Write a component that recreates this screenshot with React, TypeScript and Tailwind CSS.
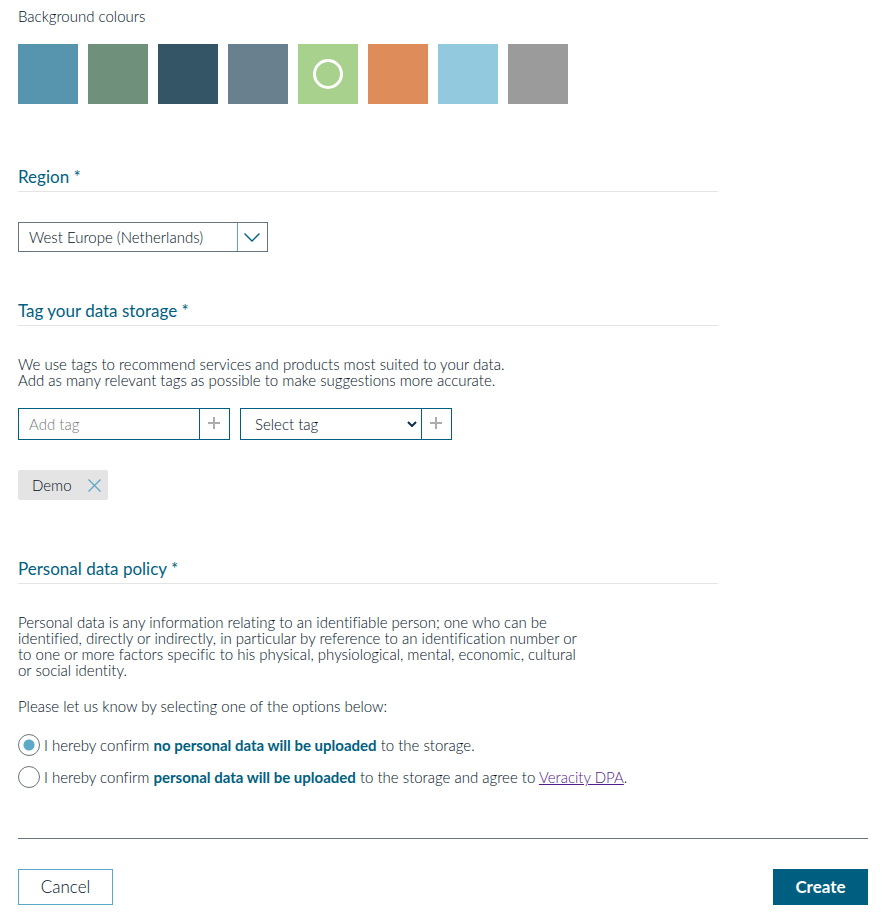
import { useState, type ReactNode } from "react";

const swatches = [
  { name: "Blue", fill: "bg-[#5794ad]" },
  { name: "Green", fill: "bg-[#6f917c]" },
  { name: "Navy", fill: "bg-[#335566]" },
  { name: "Slate", fill: "bg-[#69808f]" },
  { name: "Light green", fill: "bg-[#a9d18e]" },
  { name: "Orange", fill: "bg-[#de8c5a]" },
  { name: "Sky", fill: "bg-[#93c9df]" },
  { name: "Grey", fill: "bg-[#9b9b9b]" },
];

function SectionTitle({ children }: { children: ReactNode }) {
  return (
    <h2 className="max-w-[700px] border-b border-[#e4e4e4] pb-1 text-[17px] leading-5 font-normal text-[#005f80]">
      {children}
    </h2>
  );
}

function PlusIcon() {
  return (
    <svg width="12" height="12" viewBox="0 0 12 12" aria-hidden="true">
      <path d="M6 0v12M0 6h12" stroke="#acacac" strokeWidth="2" />
    </svg>
  );
}

function PlusButton({ label }: { label: string }) {
  return (
    <button
      type="button"
      aria-label={label}
      className="flex w-[30px] border-l border-[#005f80] pt-2 pl-2"
    >
      <PlusIcon />
    </button>
  );
}

const radioClass =
  "size-[22px] shrink-0 appearance-none rounded-full border border-[#69757e] bg-white checked:bg-[radial-gradient(circle,#5ba8c9_5px,white_6px)]";

export default function App() {
  const [colour, setColour] = useState("Light green");
  const [tags, setTags] = useState(["Demo"]);

  return (
    <form
      className="bg-white pt-2 pr-5 pb-3 pl-[18px] font-['Lato','Liberation_Sans',sans-serif] text-[15px] leading-4 font-light text-[#00101c] [font-variant-ligatures:none]"
      onSubmit={(e) => e.preventDefault()}
    >
      <p>Background colours</p>
      <div className="mt-5 flex flex-wrap gap-2.5">
        {swatches.map((s) => (
          <button
            key={s.name}
            type="button"
            aria-label={s.name}
            aria-pressed={colour === s.name}
            onClick={() => setColour(s.name)}
            className={`flex size-[60px] items-center justify-center ${s.fill}`}
          >
            {colour === s.name && (
              <span className="size-[30px] rounded-full border-3 border-white" />
            )}
          </button>
        ))}
      </div>

      <section className="mt-[63px]">
        <SectionTitle>
          <label htmlFor="region">Region *</label>
        </SectionTitle>
        <div className="mt-[30px] grid h-[30px] w-[250px] grid-cols-[1fr_30px] border border-[#69757e]">
          <select
            id="region"
            className="col-span-2 col-start-1 row-start-1 appearance-none bg-transparent pl-2.5 leading-5"
          >
            <option>West Europe (Netherlands)</option>
          </select>
          <span className="pointer-events-none col-start-2 row-start-1 flex items-center border-l border-[#5ba8c9] pl-1.5">
            <svg width="16" height="9" viewBox="0 0 16 9" fill="none" aria-hidden="true">
              <path d="M.5.5 8 8 15.500.5" stroke="#005f80" strokeWidth="1.4" />
            </svg>
          </span>
        </div>
      </section>

      <section className="mt-[49px]">
        <SectionTitle>Tag your data storage *</SectionTitle>
        <p className="mt-[30px]">
          We use tags to recommend services and products most suited to your data.
          <br />
          Add as many relevant tags as possible to make suggestions more accurate.
        </p>
        <div className="mt-5 flex flex-wrap gap-2.5">
          <div className="flex h-8 w-[212px] border border-[#005f80]">
            <input
              type="text"
              aria-label="Add tag"
              placeholder="Add tag"
              className="min-w-0 flex-1 pl-2.5 leading-5 placeholder:text-[#777777]"
            />
            <PlusButton label="Add typed tag" />
          </div>
          <div className="flex h-8 w-[212px] border border-[#005f80]">
            <div className="grid min-w-0 flex-1 grid-cols-[1fr_14px]">
              <select
                aria-label="Select tag"
                className="col-span-2 col-start-1 row-start-1 appearance-none bg-transparent pl-3.5 leading-5"
              >
                <option>Select tag</option>
              </select>
              <span className="pointer-events-none col-start-2 row-start-1 flex items-center">
                <svg width="10" height="6" viewBox="0 0 10 6" fill="none" aria-hidden="true">
                  <path d="M1 1l4 4 4-4" stroke="#0f2f45" strokeWidth="2" />
                </svg>
              </span>
            </div>
            <PlusButton label="Add selected tag" />
          </div>
        </div>
        <ul className="mt-[30px] flex h-[30px] gap-2">
          {tags.map((tag) => (
            <li
              key={tag}
              className="flex w-[90px] items-center justify-between rounded-xs bg-[#e4e4e4] pr-[7px] pl-3.5"
            >
              {tag}
              <button
                type="button"
                aria-label={`Remove ${tag}`}
                onClick={() => setTags(tags.filter((t) => t !== tag))}
              >
                <svg width="13" height="13" viewBox="0 0 13 13" aria-hidden="true">
                  <path d="M.5.5l12 12M12.500.5l-12 12" stroke="#5ba8c9" strokeWidth="1.3" />
                </svg>
              </button>
            </li>
          ))}
        </ul>
      </section>

      <section className="mt-[59px]">
        <SectionTitle>Personal data policy *</SectionTitle>
        <p className="mt-[30px] max-w-[570px]">
          Personal data is any information relating to an identifiable person; one who can be
          <br />
          identified, directly or indirectly, in particular by reference to an identification number or
          <br />
          to one or more factors specific to his physical, physiological, mental, economic, cultural
          <br />
          or social identity.
        </p>
        <fieldset className="mt-5">
          <legend>Please let us know by selecting one of the options below:</legend>
          <div className="mt-5 flex flex-col gap-2.5">
            <label className="flex items-center gap-1">
              <input type="radio" name="policy" defaultChecked className={radioClass} />
              <span>
                I hereby confirm{" "}
                <strong className="font-bold text-[#005f80]">no personal data will be uploaded</strong>{" "}
                to the storage.
              </span>
            </label>
            <label className="flex items-center gap-1">
              <input type="radio" name="policy" className={radioClass} />
              <span>
                I hereby confirm{" "}
                <strong className="font-bold text-[#005f80]">personal data will be uploaded</strong> to
                the storage and agree to{" "}
                <a href="#dpa" className="text-[#551a8b] underline">
                  Veracity DPA
                </a>
                .
              </span>
            </label>
          </div>
        </fieldset>
      </section>

      <div className="mt-[50px] flex justify-between border-t border-[#69757e] pt-[30px] text-[17px] leading-5">
        <button type="button" className="h-9 w-[95px] border border-[#5ba8c9]">
          Cancel
        </button>
        <button type="submit" className="h-9 w-[95px] bg-[#005f80] font-bold text-white">
          Create
        </button>
      </div>
    </form>
  );
}
